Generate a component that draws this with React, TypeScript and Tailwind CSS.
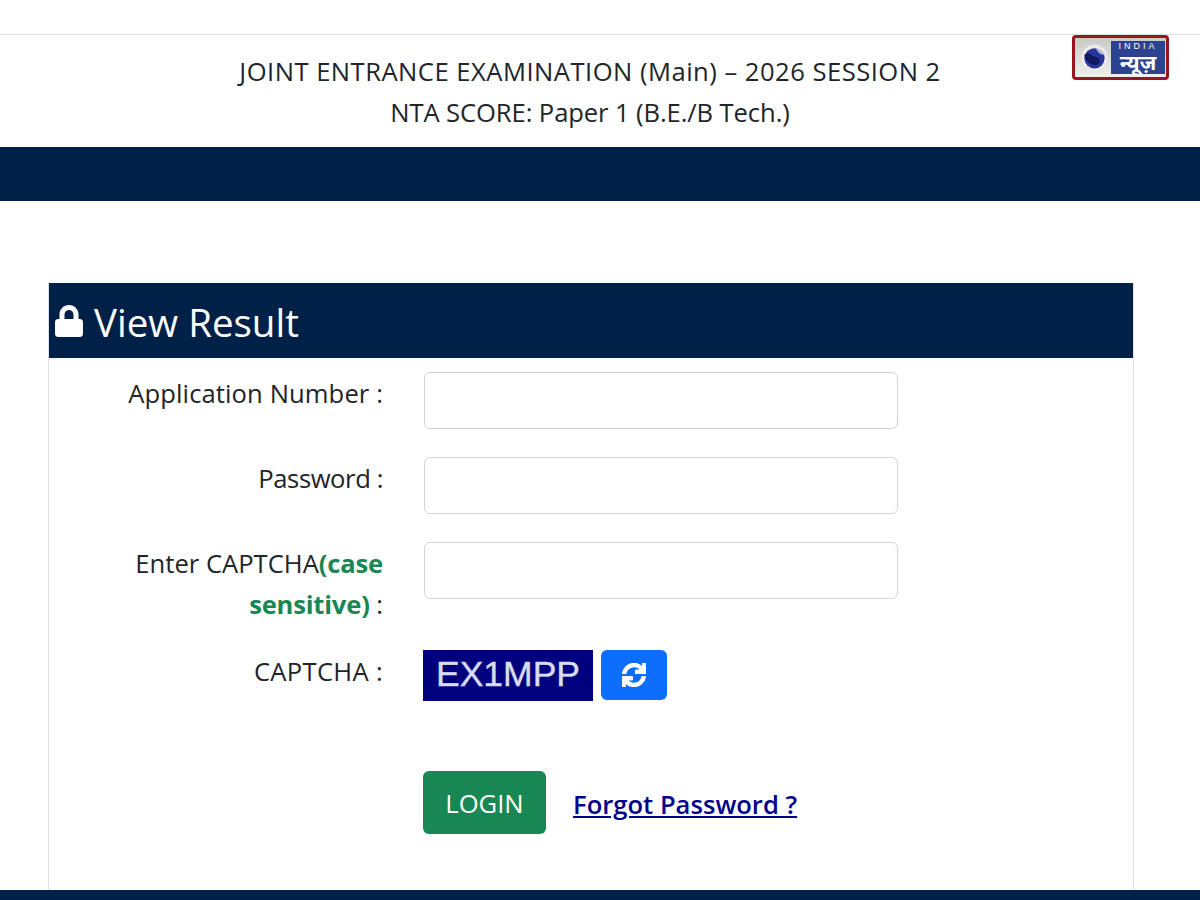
import { FaLock, FaSync } from "react-icons/fa";

function Logo() {
  return (
    <div className="absolute left-[1072px] top-[35px] flex h-[45px] w-[97px] items-center rounded-[4px] border-[3px] border-[#96161c] bg-gradient-to-b from-[#c9c9c6] to-[#efefec] px-[1px]">
      <svg viewBox="0 0 32 32" className="ml-[5px] h-[27px] w-[27px] shrink-0">
        <circle cx="16" cy="16" r="15.5" fill="#ecebe8" />
        <circle cx="16" cy="17" r="12" fill="#28369a" />
        <path d="M4 13c4-4 7-1 10 1s7 1 8 5-3 7-7 6-9-4-11-12z" fill="#11195f" />
        <path d="M17 5c5 0 9 4 10 8-3 0-6-2-7-4z" fill="#b3bcdf" />
      </svg>
      <div className="ml-[3px] flex h-[33px] w-[55px] flex-col items-center bg-[#2c4291] text-white">
        <span className="text-[9px] leading-[11px] tracking-[3px] font-['Liberation_Sans',sans-serif]">INDIA</span>
        <span className="text-[21px] leading-[21px] font-bold font-['Noto_Sans',sans-serif]">न्यूज़</span>
      </div>
    </div>
  );
}

function FormRow({ label, children, labelClass = "" }: { label: React.ReactNode; children: React.ReactNode; labelClass?: string }) {
  return (
    <div className="flex">
      <label className={`w-[334px] shrink-0 text-right text-[25.6px] leading-[41px] text-[#212529] ${labelClass}`}>{label}</label>
      <div className="ml-[41px] flex-1">{children}</div>
    </div>
  );
}

function TextInput() {
  return <input type="text" className="block h-[57px] w-[474px] rounded-[6px] border border-[#ced4da] bg-white" />;
}

export default function App() {
  return (
    <div className="relative h-[900px] overflow-hidden bg-white font-['Open_Sans',sans-serif]">
      <Logo />
      <div className="h-[35px] border-b border-[#dee2e6]" />
      <header className="h-[112px] pr-[20px] pt-[16px] text-center text-[25.6px] leading-[41px] text-[#212529]">
        <p className="tracking-[0.48px]">JOINT ENTRANCE EXAMINATION (Main) – 2026 SESSION 2</p>
        <p className="tracking-[-0.1px]">NTA SCORE: Paper 1 (B.E./B Tech.)</p>
      </header>
      <div className="h-[54px] bg-[#002147]" />

      <main className="ml-[48px] mt-[82px] h-[607px] w-[1086px] border-x border-[#dee2e6]">
        <div className="flex h-[75px] items-center bg-[#002147] pl-[6px] text-[38.5px] text-white">
          <FaLock className="mr-[11px] h-[32px] w-[28px]" />
          <span className="mt-[5px]">View Result</span>
        </div>

        <div className="flex flex-col pt-[14px]">
          <FormRow label={<span className="tracking-[0.1px]">Application Number :</span>} labelClass="mt-[1px]">
            <TextInput />
          </FormRow>
          <div className="mt-[28px]">
            <FormRow label={<span className="tracking-[-0.4px]">Password :</span>} labelClass="mt-[1px]">
              <TextInput />
            </FormRow>
          </div>
          <div className="mt-[28px]">
            <FormRow
              label={
                <>
                  Enter CAPTCHA<b className="font-bold tracking-[-0.2px] text-[#198754]">(case sensitive)</b> :
                </>
              }
              labelClass="mt-[1px] pl-[80px]"
            >
              <TextInput />
            </FormRow>
          </div>
          <div className="mt-[25px]">
            <FormRow label={<span className="tracking-[0.3px]">CAPTCHA :</span>} labelClass="mt-[1px]">
              <div className="-ml-[1px] flex items-start gap-[8px]">
                <div className="flex h-[51px] w-[170px] items-center justify-center bg-[#00007f] pb-[2px] font-['Liberation_Sans',sans-serif] text-[35.5px] leading-none text-[#d8dcee] [-webkit-text-stroke:0.4px_#d8dcee]">
                  EX1MPP
                </div>
                <button className="flex h-[50px] w-[66px] items-center justify-center rounded-[6px] bg-[#0d6efd] text-white">
                  <FaSync className="h-[24px] w-[24px]" stroke="currentColor" strokeWidth={24} />
                </button>
              </div>
            </FormRow>
          </div>
          <div className="ml-[374px] mt-[70px] flex items-center">
            <button className="h-[63px] w-[123px] rounded-[6px] bg-[#198754] pt-[4px] text-[25.6px] text-white">LOGIN</button>
            <a href="#" className="ml-[27px] mt-[5px] text-[25.6px] font-semibold text-[#00008b] underline">
              Forgot Password ?
            </a>
          </div>
        </div>
      </main>

      <footer className="h-[10px] bg-[#002147]" />
    </div>
  );
}
